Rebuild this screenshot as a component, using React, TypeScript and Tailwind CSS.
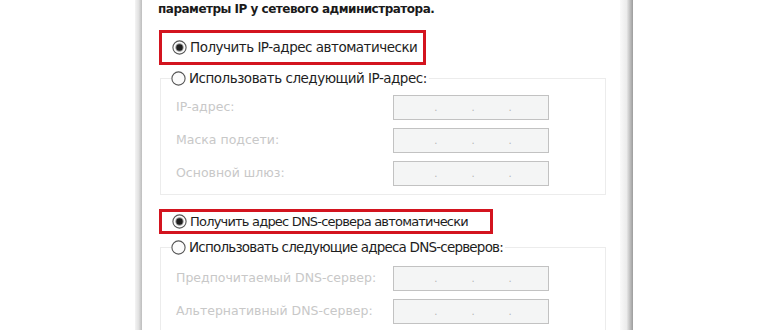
import React from "react";

const font = { fontFamily: '"DejaVu Sans", Verdana, sans-serif' };

function Radio({ checked }: { checked?: boolean }) {
  return (
    <svg width="15" height="15" viewBox="0 0 15 15" className="shrink-0">
      <circle cx="7.5" cy="7.5" r="6.6" fill="#fbfbfb" stroke="#555" strokeWidth="1.1" />
      {checked && (
        <>
          <circle cx="7.5" cy="7.5" r="4.2" fill="#9a9a9a" />
          <circle cx="7.5" cy="7.5" r="3.2" fill="#1f1f1f" />
        </>
      )}
    </svg>
  );
}

function IpInput() {
  return (
    <div className="flex h-[25px] w-[156px] items-end justify-center gap-[34px] border border-[#c2c2c2] bg-[#f4f5f5] pb-[6px] pl-[4px] text-[10px] leading-none text-[#b5b5b5]">
      <span>.</span>
      <span>.</span>
      <span>.</span>
    </div>
  );
}

function Field({ label }: { label: string }) {
  return (
    <div className="flex h-[25px] items-center justify-between">
      <span className="whitespace-nowrap text-[12.5px] text-[#c8c8c8]">{label}</span>
      <IpInput />
    </div>
  );
}

function Group({ legend, children }: { legend: string; children: React.ReactNode }) {
  return (
    <fieldset className="ml-[18px] mr-[14px] border border-[#ececec] pl-[15px] pr-[56px]">
      <legend className="ml-[-5px] flex h-[16px] items-center gap-[3px] whitespace-nowrap bg-white pr-[2px] text-[13.5px] tracking-[-0.5px] text-[#1e1e1e]">
        <Radio />
        <span>{legend}</span>
      </legend>
      {children}
    </fieldset>
  );
}

export default function App() {
  return (
    <div className="h-[330px] w-[770px] overflow-hidden bg-white" style={font}>
      <div className="ml-[135px] flex h-[330px] w-[498px]">
        {/* левая рамка окна */}
        <div className="w-[7px] bg-gradient-to-r from-[#f4f4f4] via-[#e2e2e2] to-[#bdbdbd]" />

        <div className="flex-1">
          <div className="ml-[16px] h-[18px] whitespace-nowrap text-[12px] font-bold leading-[18px] tracking-[-0.5px] text-[#1a1a1a]">
            параметры IP у сетевого администратора.
          </div>

          <div className="ml-[17px] mt-[12px] flex h-[35px] w-[267px] items-center gap-[3px] whitespace-nowrap border-[3px] border-[#d3141f] pl-[10px] text-[13.5px] tracking-[-0.5px] text-[#1e1e1e]">
            <Radio checked />
            <span>Получить IP-адрес автоматически</span>
          </div>

          <div className="mt-[5px]">
            <Group legend="Использовать следующий IP-адрес:">
              <div className="flex flex-col gap-[8px] pb-[8px] pt-[9px]">
                <Field label="IP-адрес:" />
                <Field label="Маска подсети:" />
                <Field label="Основной шлюз:" />
              </div>
            </Group>
          </div>

          <div className="ml-[17px] mt-[14px] flex h-[25px] w-[334px] items-center gap-[3px] whitespace-nowrap border-[3px] border-[#d3141f] pl-[10px] text-[13px] tracking-[-0.8px] text-[#1e1e1e]">
            <Radio checked />
            <span>Получить адрес DNS-сервера автоматически</span>
          </div>

          <div className="mt-[5px] [&_legend]:tracking-[-0.8px]">
            <Group legend="Использовать следующие адреса DNS-серверов:">
              <div className="flex flex-col gap-[8px] pb-[8px] pt-[11px]">
                <Field label="Предпочитаемый DNS-сервер:" />
                <Field label="Альтернативный DNS-сервер:" />
              </div>
            </Group>
          </div>
        </div>

        {/* правая рамка окна */}
        <div className="w-[13px] bg-gradient-to-r from-[#fafafa] via-[#ececec] to-[#9c9c9c]" />
      </div>
    </div>
  );
}
